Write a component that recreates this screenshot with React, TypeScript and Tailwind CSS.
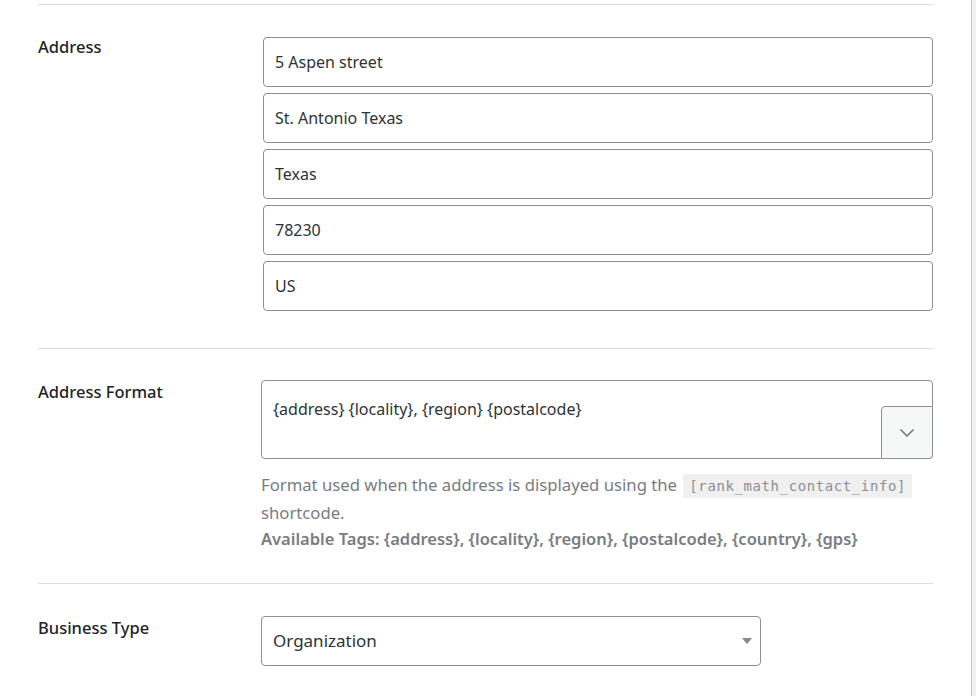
import { ChevronDown } from "lucide-react"

const font = { fontFamily: '"Noto Sans", "Open Sans", sans-serif' }

const addressLines = ["5 Aspen street", "St. Antonio Texas", "Texas", "78230", "US"]

function Label({ children }: { children: string }) {
  return <div className="w-[223px] shrink-0 text-[16.5px] font-medium text-[#1d2327]">{children}</div>
}

export default function App() {
  return (
    <div className="flex h-[696px] w-[976px] bg-white" style={font}>
      <div className="w-[972px] border-r border-[#c3c4c7] px-[38px]">
        <div className="mt-[4px] border-t border-[#dcdcde]" />

        <div className="flex pt-[32px] pb-[37px]">
          <div className="-mt-[2px]">
            <Label>Address</Label>
          </div>
          <div className="flex flex-1 flex-col gap-[6px] pl-[2px]">
            {addressLines.map((line) => (
              <div
                key={line}
                className="flex h-[50px] items-center rounded-[4px] border border-[#8c8f94] px-[11px] text-[16px] text-[#2c3338]"
              >
                {line}
              </div>
            ))}
          </div>
        </div>

        <div className="border-t border-[#dcdcde]" />

        <div className="flex pt-[31px] pb-[30px]">
          <div>
            <Label>Address Format</Label>
          </div>
          <div className="flex-1">
            <div className="relative h-[79px] rounded-[4px] border border-[#8c8f94] px-[11px] pt-[16px] text-[16px] text-[#2c3338]">
              {"{address} {locality}, {region} {postalcode}"}
              <div className="absolute -right-px -bottom-px flex h-[53px] w-[52px] items-center justify-center rounded-tl-[4px] rounded-br-[4px] border border-[#8c8f94] bg-[#f6f7f7]">
                <ChevronDown size={24} strokeWidth={1.75} className="text-[#787c82]" />
              </div>
            </div>
            <div className="mt-[13px] text-[16.7px] leading-[26.5px] text-[#787c82]">
              Format used when the address is displayed using the{" "}
              <code
                className="ml-[2px] bg-[#f0f0f1] px-[6px] py-[4px] text-[14px] tracking-[0.6px] text-[#8c8f94]"
                style={{ fontFamily: '"DejaVu Sans Mono", monospace' }}
              >
                [rank_math_contact_info]
              </code>
              <br />
              shortcode.
              <br />
              <span className="text-[16.5px] font-semibold">
                Available Tags: {"{address}"}, {"{locality}"}, {"{region}"}, {"{postalcode}"}, {"{country}"}, {"{gps}"}
              </span>
            </div>
          </div>
        </div>

        <div className="border-t border-[#dcdcde]" />

        <div className="flex pt-[32px]">
          <div>
            <Label>Business Type</Label>
          </div>
          <div className="relative flex h-[50px] w-[500px] items-center rounded-[4px] border border-[#8c8f94] px-[11px] text-[17px] text-[#2c3338]">
            Organization
            <svg className="absolute right-[8px] top-[21px]" width="10" height="6" viewBox="0 0 10 6">
              <path d="M0 0 L10 0 L5 6 Z" fill="#888" />
            </svg>
          </div>
        </div>
      </div>
      <div className="flex-1 bg-[#f0f0f1]" />
    </div>
  )
}
